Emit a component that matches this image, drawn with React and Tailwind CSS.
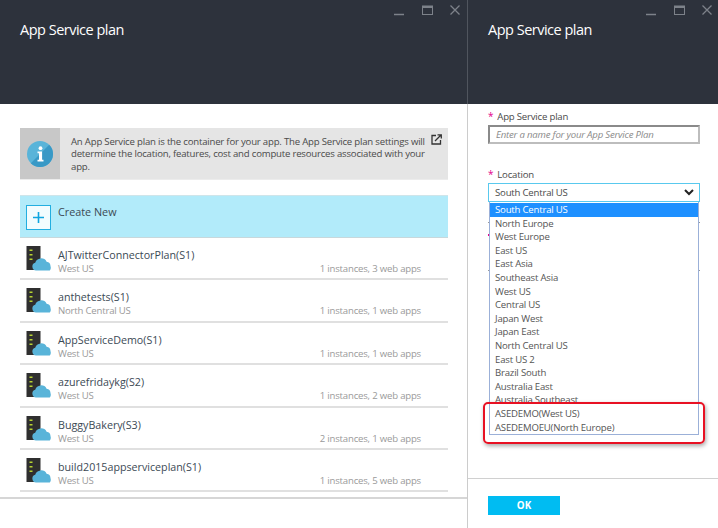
import React from 'react';

const plans = [
  { name: 'AJTwitterConnectorPlan(S1)', region: 'West US', usage: '1 instances, 3 web apps' },
  { name: 'anthetests(S1)', region: 'North Central US', usage: '1 instances, 1 web apps' },
  { name: 'AppServiceDemo(S1)', region: 'West US', usage: '1 instances, 1 web apps' },
  { name: 'azurefridaykg(S2)', region: 'West US', usage: '1 instances, 2 web apps' },
  { name: 'BuggyBakery(S3)', region: 'West US', usage: '2 instances, 1 web apps' },
  { name: 'build2015appserviceplan(S1)', region: 'West US', usage: '1 instances, 5 web apps' },
];

const locations = [
  'South Central US', 'North Europe', 'West Europe', 'East US', 'East Asia', 'Southeast Asia',
  'West US', 'Central US', 'Japan West', 'Japan East', 'North Central US', 'East US 2',
  'Brazil South', 'Australia East', 'Australia Southeast', 'ASEDEMO(West US)', 'ASEDEMOEU(North Europe)',
];

const WindowControls = () => (
  <svg width="66" height="12" viewBox="0 0 66 12" fill="none" stroke="#7d828a" className="block">
    <path d="M0 9.5h10" strokeWidth="1.5" />
    <rect x="28.5" y="1" width="10" height="8.5" strokeWidth="1" />
    <path d="M28 2h11" strokeWidth="2" />
    <path d="M56.5 .5l9 9M65.5 .5l-9 9" strokeWidth="1.3" />
  </svg>
);

const BladeHeader = ({ controls, edge }) => (
  <div className={`h-[104px] bg-[#2d323c] shrink-0 ${edge}`}>
    <div className={`flex justify-end pt-[5px] ${controls}`}>
      <WindowControls />
    </div>
    <h1 className="ml-5 mt-[3px] text-[14.5px] leading-5 tracking-[-0.5px] text-white font-normal">App Service plan</h1>
  </div>
);

const InfoIcon = () => (
  <svg width="26" height="26" viewBox="0 0 26 26">
    <circle cx="13" cy="13" r="13" fill="#59b4d9" />
    <path d="M22.2 3.8A13 13 0 0 1 3.8 22.2z" fill="#3999c6" />
    <circle cx="13.5" cy="7.2" r="1.9" fill="#fff" />
    <path d="M10.5 10.5h4.6v8.3h1.4v1.7h-6v-1.7h1.5v-6.6h-1.5z" fill="#fff" />
  </svg>
);

const PlanIcon = () => (
  <svg width="25" height="25" viewBox="0 0 25 25" className="shrink-0">
    <rect x="0.5" y="0" width="14" height="24" fill="#2f2f2f" />
    <rect x="3.5" y="3.5" width="3" height="1.5" fill="#b8d432" />
    <rect x="3.5" y="8" width="3" height="1.5" fill="#b8d432" />
    <rect x="3.5" y="12.5" width="3" height="1.5" fill="#b8d432" />
    <path d="M10 24.5a4 4 0 0 1-.8-7.8 6.2 6.2 0 0 1 11.4-1 4.5 4.5 0 0 1 3.9 4.4v.2a4.3 4.3 0 0 1-.7 4.2z" fill="#59b4d9" />
  </svg>
);

const Star = () => <span className="text-[#e3008c] mr-[4px] text-[10px]">*</span>;

export default function App() {
  return (
    <div className="flex h-[528px] w-[718px] overflow-hidden bg-white text-[10px] font-['Open_Sans',sans-serif]">
      <section className="w-[467px] shrink-0 flex flex-col">
        <BladeHeader controls="pr-[7px]" edge="" />
        <div className="flex-1 px-5 pt-6">
          <div className="flex h-[52px] w-[428px] bg-[#e5e5e5] border-b border-[#ececec]">
            <div className="w-10 bg-[#c8c8c8] flex items-center justify-center">
              <InfoIcon />
            </div>
            <p className="ml-[11px] w-[360px] pt-[8px] text-[9.6px] leading-[12.4px] tracking-[-0.2px] text-[#4a4a4a]">
              An App Service plan is the container for your app. The App Service plan settings will determine the location, features, cost and compute resources associated with your app.
            </p>
            <svg width="11" height="11" viewBox="0 0 11 11" fill="none" stroke="#333" strokeWidth="1.3" className="mt-[6px]">
              <path d="M5 1.5H1v8.5h8.5V6" />
              <path d="M4 7l6-6M6.5.8h3.8v3.8" />
            </svg>
          </div>
          <div className="flex h-[43px] w-[428px] mt-[15px] pl-[6px] pt-[9px] bg-[#b2ebfa] border-t border-[#cfe5ea] border-b-[1px] border-b-[#c8d8dc]">
            <div className="w-[25px] h-[25px] border border-[#22aee0] bg-[#f2fcfe] flex items-center justify-center">
              <svg width="11" height="11" viewBox="0 0 11 11" stroke="#0ea5e0" strokeWidth="1.6"><path d="M5.5 0v11M0 5.5h11" /></svg>
            </div>
            <span className="ml-[7px] -mt-[1px] text-[10.8px] leading-4 text-[#3c4a55]">Create New</span>
          </div>
          <div className="w-[428px]">
            {plans.map((p) => (
              <div key={p.name} className="flex h-[42.4px] pl-[6px] pt-[8px] border-b-2 border-[#e0e0e0]">
                <PlanIcon />
                <div className="ml-[7px] mt-[2px] flex-1">
                  <div className="text-[10.7px] leading-[14px] text-[#3c4a55]">{p.name}</div>
                  <div className="flex justify-between pr-[27px] text-[9.6px] leading-[14px] tracking-[-0.2px] text-[#9a9a9a]">
                    <span>{p.region}</span>
                    <span>{p.usage}</span>
                  </div>
                </div>
              </div>
            ))}
          </div>
        </div>
        <div className="h-[31px] border-t-2 border-[#d6d6d6]" />
      </section>

      <section className="flex-1 flex flex-col relative">
        <BladeHeader controls="pr-[6px]" edge="border-l border-[#50555e]" />
        <div className="flex-1 flex flex-col border-l border-[#cccccc]">
          <div className="flex-1 pl-5 pr-[18px] pt-[5px] text-[9.6px] tracking-[-0.2px]">
            <label className="block leading-[14px] text-[#4a4a4a]"><Star />App Service plan</label>
            <div className="h-[19px] mt-[1px] border-2 border-t-[#8a8a8a] border-l-[#8a8a8a] border-[#bdbdbd] pl-[6px] leading-[15px] italic text-[#8a8a8a]">
              Enter a name for your App Service Plan
            </div>
            <label className="block mt-[23px] leading-[14px] text-[#4a4a4a]"><Star />Location</label>
            <div className="relative mt-[1px]">
              <div className="flex items-center justify-between h-[19px] border border-[#59c9ee] pl-[6px] pr-[5px] text-[#4a4a4a]">
                <span className="pt-[1px]">South Central US</span>
                <svg width="10" height="7" viewBox="0 0 10 7" fill="none" stroke="#222" strokeWidth="2"><path d="M1 1l4 4 4-4" /></svg>
              </div>
              <ul className="absolute left-[1px] right-[1px] top-[19px] pt-[1px] bg-white border border-[#9bb0d8] border-t-0 z-10">
                {locations.map((l, i) => (
                  <li key={l} className={`h-[13.6px] pl-[5px] leading-[13.6px] ${i === 0 ? 'bg-[#1e90ff] text-white' : 'text-[#555]'}`}>{l}</li>
                ))}
              </ul>
            </div>
            {/* next field, mostly covered by the open list */}
            <div className="mt-[20px] h-[49px] border-y border-[#999999] pt-[11px]">
              <div className="w-[2px] h-[2px] bg-[#e3008c]" />
            </div>
          </div>
          <div className="h-[50px] border-t border-[#d0d0d0] pl-5 pt-[17px]">
            <button className="w-[72px] h-[19px] bg-[#00bcf2] text-white text-[9.8px] font-bold leading-[19px]">OK</button>
          </div>
        </div>
        <div className="absolute left-[16px] top-[402px] w-[222px] h-[42px] border-2 border-[#e81123] rounded-[5px] shadow-[1px_2px_4px_rgba(0,0,0,0.35)] z-20" />
      </section>
    </div>
  );
}
